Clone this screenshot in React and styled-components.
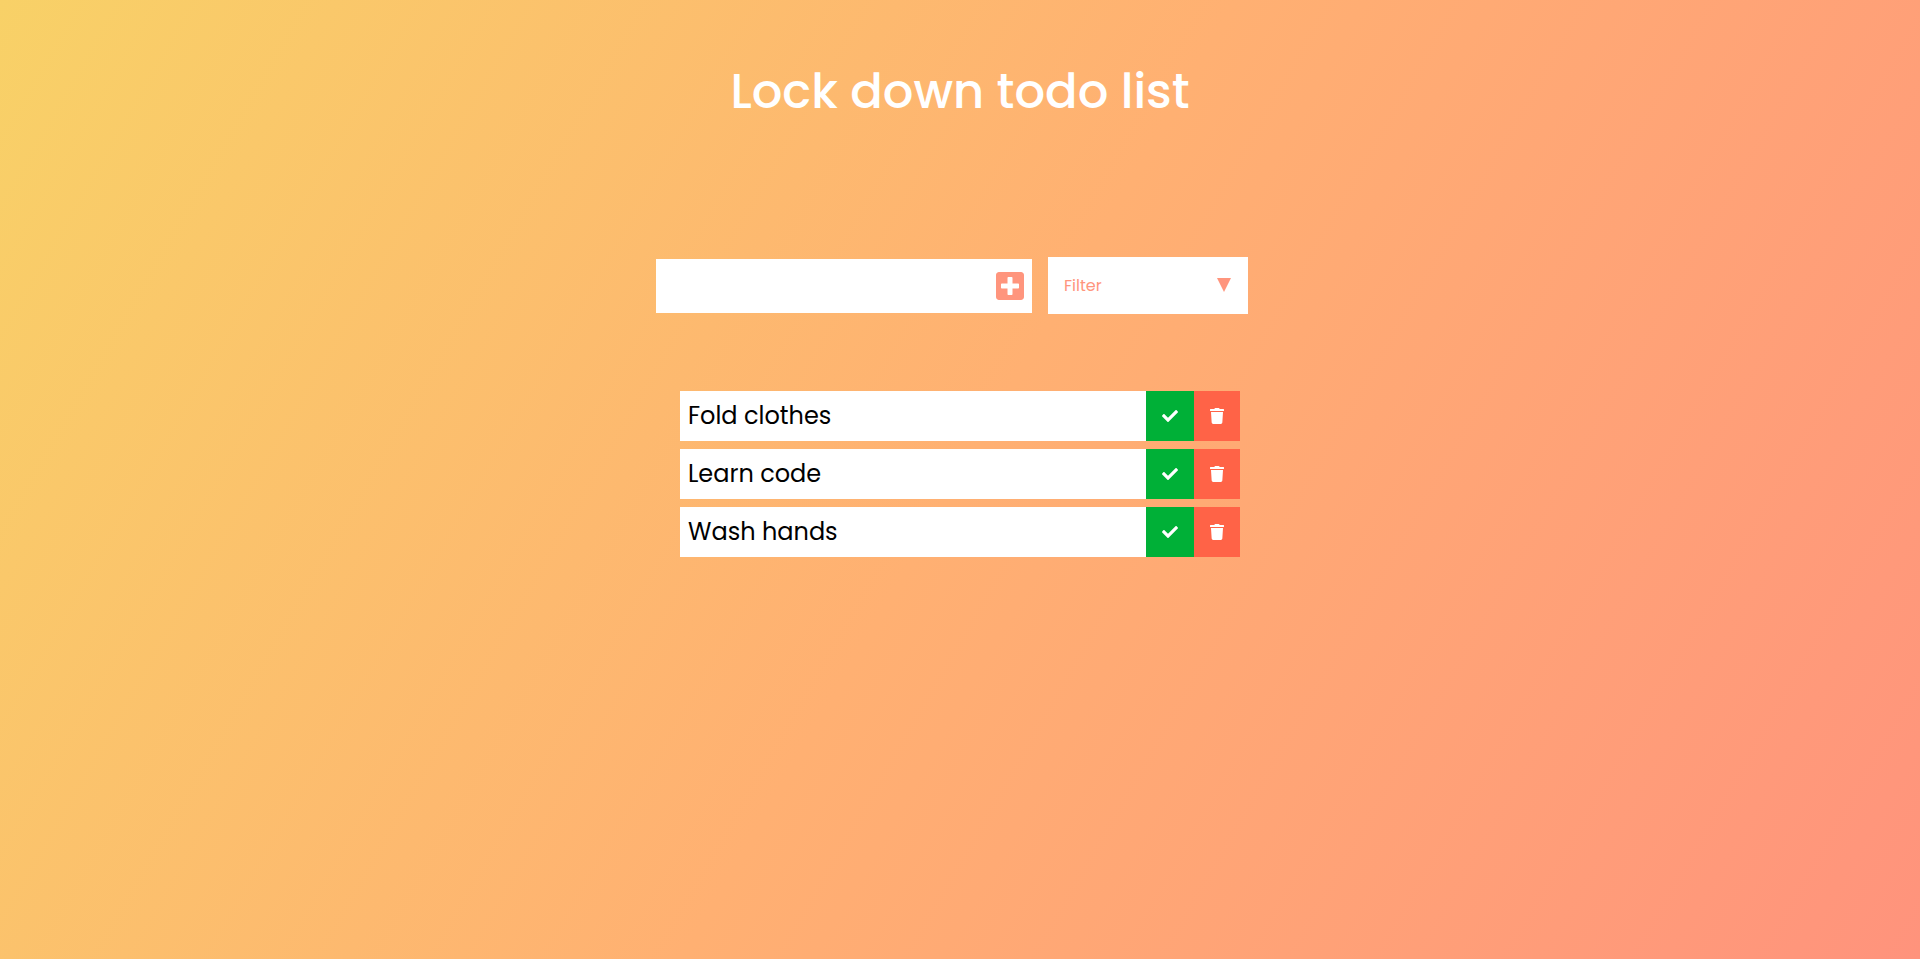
import React, { useState } from "react";
import styled, { createGlobalStyle } from "styled-components";
import { FaCheck, FaPlusSquare, FaTrash } from "react-icons/fa";

const GlobalStyle = createGlobalStyle`
  * {
    margin: 0;
    padding: 0;
    box-sizing: border-box;
  }

  body {
    min-height: 100vh;
    color: white;
    font-family: Poppins, Inter, sans-serif;
    background-image: linear-gradient(120deg, #f8d167, #ffb072, #ff937c);
    background-attachment: fixed;
  }
`;

const Header = styled.header`
  display: flex;
  justify-content: center;
  align-items: center;
  min-height: 184px;
`;

const Title = styled.h1`
  font-size: 48px;
  line-height: 72px;
  font-weight: 500;
`;

const Form = styled.form`
  display: flex;
  flex-wrap: wrap;
  justify-content: center;
  align-items: center;
  gap: 16px;
  min-height: 203px;
  padding-right: 16px;
`;

const TaskField = styled.div`
  display: flex;
  width: 376px;
  height: 54px;
  background: white;
`;

const TaskInput = styled.input`
  flex: 1;
  min-width: 0;
  padding: 8px;
  border: none;
  outline: none;
  background: transparent;
  font: inherit;
  font-size: 24px;
`;

const AddButton = styled.button`
  display: flex;
  align-items: center;
  padding: 0 6px;
  border: none;
  background: transparent;
  color: #ff957d;
  font-size: 32px;
  cursor: pointer;
`;

const FilterField = styled.div`
  display: grid;
  align-items: center;
  width: 200px;
  height: 57px;
  background: white;
  color: #ff957d;

  > * {
    grid-area: 1 / 1;
  }
`;

const FilterSelect = styled.select`
  width: 100%;
  height: 100%;
  padding: 0 48px 0 16px;
  border: none;
  outline: none;
  appearance: none;
  background: transparent;
  color: inherit;
  font: inherit;
  font-size: 16px;
  cursor: pointer;
`;

const Arrow = styled.svg`
  justify-self: end;
  width: 14px;
  height: 14px;
  margin: 0 17px 2px 0;
  fill: currentColor;
  pointer-events: none;
`;

const TodoList = styled.ul`
  display: flex;
  flex-direction: column;
  gap: 8px;
  width: 100%;
  max-width: 560px;
  margin: 4px auto 0;
  list-style: none;
`;

const Todo = styled.li`
  display: flex;
  min-height: 50px;
  background: white;
  color: black;
  opacity: ${({ $done }) => ($done ? 0.5 : 1)};
`;

const TodoText = styled.span`
  flex: 1;
  padding: 0 8px;
  font-size: 24px;
  line-height: 50px;
  text-decoration: ${({ $done }) => ($done ? "line-through" : "none")};
`;

const ActionButton = styled.button`
  display: flex;
  align-items: center;
  padding: 0 ${({ $inset }) => $inset};
  border: none;
  background: ${({ $color }) => $color};
  color: white;
  font-size: 16px;
  cursor: pointer;
`;

const initialTodos = ["Fold clothes", "Learn code", "Wash hands"].map(
  (text, id) => ({ id, text, done: false })
);

export default function App() {
  const [todos, setTodos] = useState(initialTodos);
  const [draft, setDraft] = useState("");
  const [filter, setFilter] = useState("filter");

  const addTodo = (event) => {
    event.preventDefault();
    if (!draft.trim()) return;
    setTodos([...todos, { id: Date.now(), text: draft.trim(), done: false }]);
    setDraft("");
  };

  const toggle = (id) =>
    setTodos(todos.map((t) => (t.id === id ? { ...t, done: !t.done } : t)));

  const visible = todos.filter(
    (t) =>
      (filter !== "completed" || t.done) && (filter !== "uncompleted" || !t.done)
  );

  return (
    <>
      <GlobalStyle />
      <Header>
        <Title>Lock down todo list</Title>
      </Header>
      <main>
        <Form onSubmit={addTodo}>
          <TaskField>
            <TaskInput
              type="text"
              aria-label="New todo"
              value={draft}
              onChange={(event) => setDraft(event.target.value)}
            />
            <AddButton type="submit" aria-label="Add todo">
              <FaPlusSquare />
            </AddButton>
          </TaskField>
          <FilterField>
            <FilterSelect
              aria-label="Filter todos"
              value={filter}
              onChange={(event) => setFilter(event.target.value)}
            >
              <option value="filter">Filter</option>
              <option value="completed">Completed</option>
              <option value="uncompleted">Uncompleted</option>
            </FilterSelect>
            <Arrow viewBox="0 0 14 14" aria-hidden="true">
              <path d="M0 0H14L7 14Z" />
            </Arrow>
          </FilterField>
        </Form>
        <TodoList>
          {visible.map((todo) => (
            <Todo key={todo.id} $done={todo.done}>
              <TodoText $done={todo.done}>{todo.text}</TodoText>
              <ActionButton
                type="button"
                aria-label={`Complete ${todo.text}`}
                $color="#00b037"
                $inset="16px"
                onClick={() => toggle(todo.id)}
              >
                <FaCheck />
              </ActionButton>
              <ActionButton
                type="button"
                aria-label={`Delete ${todo.text}`}
                $color="#ff6347"
                $inset="15px"
                onClick={() => setTodos(todos.filter((t) => t.id !== todo.id))}
              >
                <FaTrash />
              </ActionButton>
            </Todo>
          ))}
        </TodoList>
      </main>
    </>
  );
}
